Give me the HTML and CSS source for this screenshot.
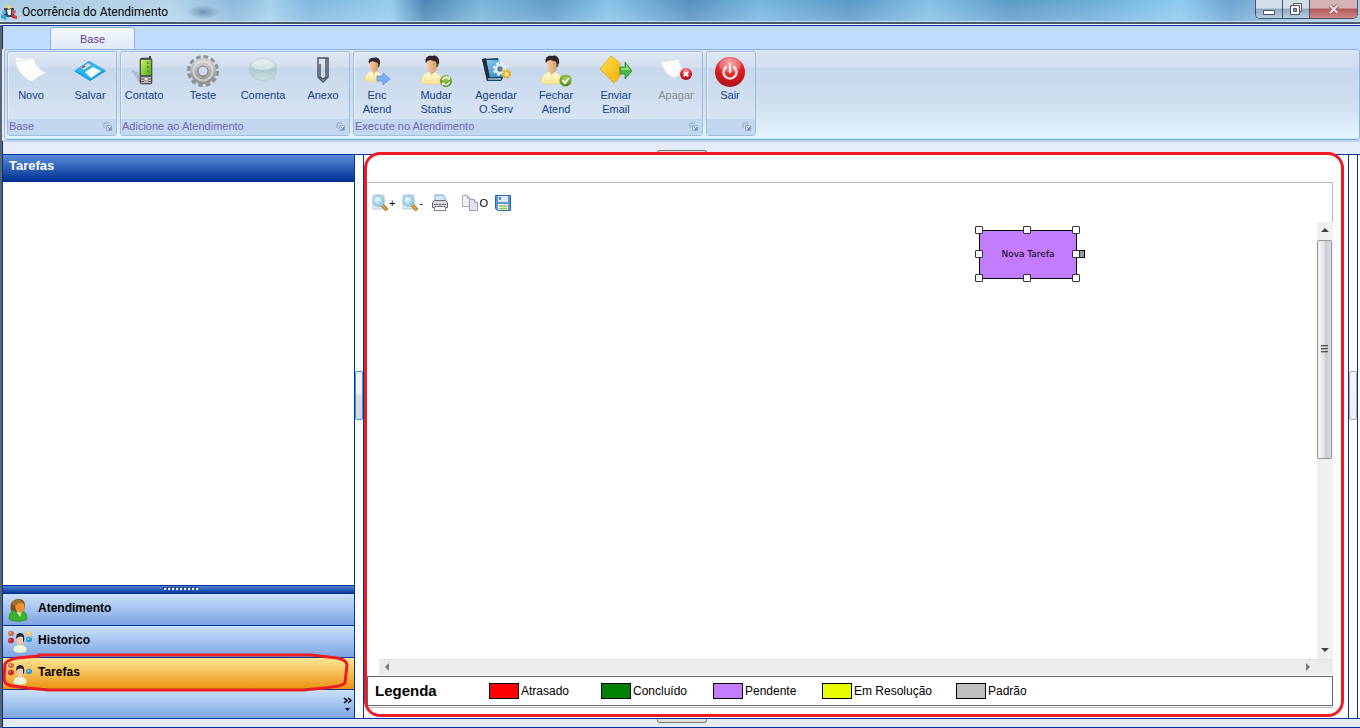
FILE: index.html
```html
<!DOCTYPE html>
<html lang="pt-BR">
  <head>
    <meta charset="utf-8">
    <title>Ocorrência do Atendimento</title>
    <link rel="stylesheet" href="styles.css">
  </head>
  <body>
    <!-- shared icons and gradients -->
    <svg class="defs" width="0" height="0">
      <defs>
        <linearGradient id="gPaper" x1="0" y1="0" x2="1" y2="1"><stop offset="0" stop-color="#fff"/><stop offset=".7" stop-color="#fbfbfb"/><stop offset="1" stop-color="#ddd"/></linearGradient>
        <linearGradient id="gGear" x1="0" y1="0" x2="0" y2="1"><stop offset="0" stop-color="#cfcfcf"/><stop offset="1" stop-color="#959595"/></linearGradient>
        <linearGradient id="gBubble" x1="0" y1="0" x2="0" y2="1"><stop offset="0" stop-color="#e3eded"/><stop offset=".5" stop-color="#aecbd1"/><stop offset="1" stop-color="#cbdfe3"/></linearGradient>
        <linearGradient id="gShirt" x1="0" y1="0" x2="0" y2="1"><stop offset="0" stop-color="#fffce0"/><stop offset="1" stop-color="#f8e38e"/></linearGradient>
        <linearGradient id="gFace" x1="0" y1="0" x2="1" y2="0"><stop offset="0" stop-color="#f7cfa5"/><stop offset="1" stop-color="#d69867"/></linearGradient>
        <linearGradient id="gMail" x1="0" y1="0" x2="1" y2="1"><stop offset="0" stop-color="#ffe44d"/><stop offset="1" stop-color="#f2ac05"/></linearGradient>
        <linearGradient id="gBook" x1="0" y1="0" x2="1" y2="1"><stop offset="0" stop-color="#8fd3f5"/><stop offset="1" stop-color="#2583c4"/></linearGradient>
        <linearGradient id="gLcd" x1="0" y1="0" x2="1" y2="1"><stop offset="0" stop-color="#c9f26b"/><stop offset="1" stop-color="#4dac0c"/></linearGradient>
        <radialGradient id="gRed" cx=".5" cy=".2" r=".9"><stop offset="0" stop-color="#f58d8d"/><stop offset=".5" stop-color="#dc1f25"/><stop offset="1" stop-color="#a00a10"/></radialGradient>
        <radialGradient id="gGreen" cx=".5" cy=".3" r=".7"><stop offset="0" stop-color="#a9d05a"/><stop offset="1" stop-color="#4c8a12"/></radialGradient>
        <radialGradient id="gLens" cx=".4" cy=".35" r=".7"><stop offset="0" stop-color="#e9fbff"/><stop offset="1" stop-color="#79bfe8"/></radialGradient>
      </defs>
      <symbol id="person" viewBox="0 0 32 32">
        <path d="M1 27c0-6 3-8 8-10h5c5 2 8 4 8 10-3 3-18 3-21 0z" fill="url(#gShirt)" stroke="#e0cf8a" stroke-width=".6"/>
        <path d="M8.500 15l3 5 5-5v-4h-8z" fill="#e0a877"/>
        <path d="M6.500 7c0-3 2-4 5-4s6 1 6 4c0 6-2 11-5.500 11S6.500 13 6.500 7z" fill="url(#gFace)"/>
        <path d="M6 8C4 3 8 0 12 1c4-2 8 2 7 7l-1.500 4h-1V7c-2-1-4-1-6-2-2 0-3.500 1-4.500 3z" fill="#33262f"/>
        <path d="M17.500 9v3" stroke="#3f8d35" stroke-width="1.500"/>
        <path d="M12 20v8M5 23v4M19 23v4" stroke="#ecd788" stroke-width=".8"/>
      </symbol>
      <symbol id="launcher" viewBox="0 0 9 9">
        <path d="M1 6V1h5" fill="none" stroke="#8fa9cb"/>
        <path d="M3.500 3.500h5v5h-5z" fill="#e9f1fb" stroke="#8fa9cb"/>
        <path d="M4.500 4.500l3 3M5 7.500h2.500V5" fill="none" stroke="#6f8bb2"/>
      </symbol>
      <symbol id="magnifier" viewBox="0 0 18 18">
        <path d="M2 1h11v14H2z" fill="#e6eef5" stroke="#b9c9d8"/>
        <path d="M10 10l6 6" stroke="#8a5a1c" stroke-width="3.600"/>
        <path d="M10 10l5.500 5.500" stroke="#f2a735" stroke-width="2.200"/>
        <circle cx="7.500" cy="7" r="5.500" fill="url(#gLens)" stroke="#9cc3da" stroke-width="1.300"/>
      </symbol>
      <symbol id="group" viewBox="0 0 26 24">
        <ellipse cx="4" cy="3.500" rx="3" ry="2.500" fill="#c56b45"/><circle cx="3" cy="3" r="1" fill="#e9b59d"/>
        <ellipse cx="4" cy="10.500" rx="3" ry="2.700" fill="#c9202c"/><circle cx="3" cy="10" r="1" fill="#ee8c92"/>
        <ellipse cx="22" cy="3.500" rx="3" ry="2.500" fill="#f7c467"/><circle cx="21.500" cy="3" r="1" fill="#fff1c8"/>
        <ellipse cx="22" cy="9.500" rx="3" ry="2.700" fill="#219bd0"/><circle cx="21.500" cy="9" r="1" fill="#a3e2fa"/>
        <path d="M6.500 20c0-4 3-5 6.500-5s6.500 1 6.500 5l-1.500 2c-3 1-7 1-10 0z" fill="#eaf4da" stroke="#c5dcae" stroke-width=".6"/>
        <path d="M9.500 7c1-2 6-2 7 0 0 5-1 9-3.500 9s-3.500-4-3.500-9z" fill="#f3cbac"/>
        <path d="M9.500 9c-1-4 1-6 4-6 3 0 4.500 3 3.500 8l-1 1V7c-2-1-5-1-6.500 2z" fill="#252430"/>
        <path d="M11 15.500l2 3 2.500-3-2.500 1z" fill="#fff"/>
      </symbol>
    </svg>

    <div class="window">
      <header class="titlebar">
        <svg class="app-icon" width="17" height="17" viewBox="0 0 17 17">
          <path d="M3 4h10v9H3z" fill="#3b4a59"/>
          <path d="M0 10l6 2-1 4-5-2z" fill="#3aa6cf"/>
          <circle cx="8" cy="3" r="2" fill="#f2d94a"/><path d="M6 6l4-1v6H7z" fill="#e7eef4"/>
          <path d="M11 10l5 2v3l-5-1z" fill="#d9323c"/><circle cx="13" cy="8" r="2" fill="#e05a60"/>
          <circle cx="3" cy="8" r="2" fill="#5cb9dc"/>
        </svg>
        <h1 class="title">Ocorrência do Atendimento</h1>
        <div class="window-buttons">
          <button class="win-btn" aria-label="Minimizar">
            <svg width="14" height="16" viewBox="0 0 14 16"><path d="M1.500 9.500h11v4h-11z" fill="#fff" stroke="#4c5666"/></svg>
          </button>
          <button class="win-btn" aria-label="Restaurar">
            <svg width="14" height="14" viewBox="0 0 14 14"><path d="M4.500 1.500h8v8h-8z" fill="#fff" stroke="#4c5666"/><path d="M1.500 3.500h9v9h-9z" fill="#fff" stroke="#4c5666"/><path d="M4.500 6.500h3v3h-3z" fill="#89a6c4" stroke="#4c5666"/></svg>
          </button>
          <button class="win-btn win-close" aria-label="Fechar">
            <svg width="14" height="14" viewBox="0 0 14 14"><path d="M3 3.500l7.500 7.500M10.500 3.500L3 11" stroke="#94626a" stroke-width="4"/><path d="M3 3.500l7.500 7.500M10.500 3.500L3 11" stroke="#e6d5d8" stroke-width="2.400"/></svg>
          </button>
        </div>
      </header>

      <div class="client">
        <nav class="tabs"><button class="tab">Base</button></nav>

        <div class="ribbon">
          <section class="ribbon-group">
            <div class="ribbon-buttons">
              <button class="tool">
                <svg viewBox="0 0 32 32"><path d="M0 6c6 1 12-2 19-3 1 7 6 12 13 15-6 2-10 5-15 9C8 23 2 15 0 6z" fill="url(#gPaper)" stroke="#d5d5d5" stroke-width=".6"/><path d="M1 6c0-4 2-5 4-3s8-1 14 0" fill="#fff" stroke="#ddd" stroke-width=".7"/></svg>
                <span>Novo</span>
              </button>
              <button class="tool">
                <svg viewBox="0 0 32 32"><path d="M0 16L15 6l17 10-16 10z" fill="#1798d8"/><path d="M1 15.500L15 6l16 9-15 9z" fill="#2bb4ed"/><path d="M11 17l8-5 8 4-10 7z" fill="#f4fafc"/><path d="M6 13l8-5 4 2-8 5z" fill="#d4dde2" stroke="#7795a6" stroke-width=".6"/><path d="M8 13l3-2" stroke="#41637a" stroke-width="1.500"/></svg>
                <span>Salvar</span>
              </button>
            </div>
            <footer class="group-label">Base <svg class="launcher"><use href="#launcher"/></svg></footer>
          </section>

          <section class="ribbon-group">
            <div class="ribbon-buttons">
              <button class="tool">
                <svg viewBox="0 0 32 32"><path d="M3 15l9 3v11z" fill="#98a4ae" opacity=".55"/><path d="M21 1h2v5h-2z" fill="#444"/><rect x="12" y="3" width="12" height="26" rx="2" fill="#575757" stroke="#3d3d3d" stroke-width=".6"/><path d="M13 5h10v15H13z" fill="url(#gLcd)"/><path d="M20 7v2M20 11v2M20 15v2" stroke="#4f9a26" stroke-width="2"/><path d="M13 22h10v6H13z" fill="#bdbdbd"/><path d="M13 24h3m4 0h3M13 26.500h3m4 0h3" stroke="#555"/><circle cx="18" cy="24" r="2" fill="#f4f4f4" stroke="#666" stroke-width=".7"/></svg>
                <span>Contato</span>
              </button>
              <button class="tool">
                <svg viewBox="0 0 32 32"><circle cx="16" cy="16" r="14" fill="none" stroke="#929292" stroke-width="4" stroke-dasharray="4.600 2.730"/><circle cx="16" cy="16" r="9" fill="none" stroke="url(#gGear)" stroke-width="8"/><circle cx="16" cy="16" r="9.500" fill="none" stroke="#e2e2e2" stroke-width="2" opacity=".7"/><circle cx="16" cy="16" r="5" fill="#cbdaec" stroke="#7c7c7c"/></svg>
                <span>Teste</span>
              </button>
              <button class="tool">
                <svg viewBox="0 0 32 32"><path d="M21 23c4 0 5 2 8 4-2-3-2-5-2-7z" fill="#b7cfd4"/><ellipse cx="16" cy="14.500" rx="14" ry="11" fill="url(#gBubble)" stroke="#b2c9cd" stroke-width=".7"/><ellipse cx="16" cy="9.500" rx="11" ry="5.500" fill="#eef4f4" opacity=".55"/></svg>
                <span>Comenta</span>
              </button>
              <button class="tool">
                <svg viewBox="0 0 32 32"><path d="M13 9v13l3 2 3-2V3h-8v19l5 5 5-5V3h-2" fill="none" stroke="#50545c" stroke-width="1.500"/></svg>
                <span>Anexo</span>
              </button>
            </div>
            <footer class="group-label">Adicione ao Atendimento <svg class="launcher"><use href="#launcher"/></svg></footer>
          </section>

          <section class="ribbon-group">
            <div class="ribbon-buttons">
              <button class="tool">
                <svg viewBox="0 0 32 32"><use href="#person" x="3" y="2" width="27" height="27"/><path d="M16 21h6v-3l7 6-7 6v-4h-6z" fill="#7eaef5" stroke="#5588d6" stroke-width=".7"/></svg>
                <span>Enc<br>Atend</span>
              </button>
              <button class="tool">
                <svg viewBox="0 0 32 32"><use href="#person" x="0" y="0" width="32" height="32"/><circle cx="26" cy="26" r="6" fill="url(#gGreen)"/><path d="M22.500 25a4 4 0 0 1 6-2M29.500 27a4 4 0 0 1-6 2" fill="none" stroke="#fff" stroke-width="1.500"/><path d="M27 24.500h3V21zM25 27.500h-3V31z" fill="#fff"/></svg>
                <span>Mudar<br>Status</span>
              </button>
              <button class="tool">
                <svg viewBox="0 0 32 32"><path d="M2 4l5 22h14l2-3L18 3z" fill="#174565"/><path d="M5 5h14l3 17H9z" fill="url(#gBook)"/><path d="M2 4l4-1 4 20-3 3z" fill="#20303c"/><path d="M8 24h13" stroke="#fff"/><circle cx="20" cy="14" r="5.500" fill="none" stroke="#eef2f4" stroke-width="3" stroke-dasharray="2.700 1.620"/><circle cx="20" cy="14" r="4" fill="#5d7f95" stroke="#dfe7ec" stroke-width="2.600"/><circle cx="26.500" cy="19" r="3.300" fill="none" stroke="#e0a012" stroke-width="2.400" stroke-dasharray="2 .960"/><circle cx="26.500" cy="19" r="2.500" fill="#fff4bb" stroke="#f0bb25" stroke-width="1.600"/></svg>
                <span>Agendar<br>O.Serv</span>
              </button>
              <button class="tool">
                <svg viewBox="0 0 32 32"><use href="#person" x="0" y="0" width="32" height="32"/><circle cx="25.500" cy="25.500" r="6" fill="url(#gGreen)"/><path d="M22.500 25l2.500 3 4-5" fill="none" stroke="#fff" stroke-width="2"/></svg>
                <span>Fechar<br>Atend</span>
              </button>
              <button class="tool">
                <svg viewBox="0 0 32 32"><path d="M0 14L11 1l9 7v13l-6 7z" fill="url(#gMail)" stroke="#d99a08" stroke-width=".7"/><path d="M1 14l10-4 8-2M11 10l3 17" fill="none" stroke="#f9cf38"/><path d="M20 12h5V7l7 9-7 8v-5h-5z" fill="#51b649" stroke="#2e8a31" stroke-width=".8"/><path d="M21 13h5V9.500l4 5.500h-9z" fill="#90d97e"/></svg>
                <span>Enviar<br>Email</span>
              </button>
              <button class="tool" disabled>
                <svg viewBox="0 0 32 32"><path d="M1 7l13-2 5-1c0 5 2 9 6 13l-10 6C7 21 3 14 1 7z" fill="url(#gPaper)" stroke="#ddd" stroke-width=".6"/><path d="M1 7c1-3 3-2 4-1l14-2" fill="none" stroke="#ddd"/><circle cx="26" cy="19" r="6" fill="url(#gRed)"/><path d="M23.700 16.700l4.600 4.600m0-4.600l-4.600 4.600" stroke="#fff" stroke-width="2"/></svg>
                <span>Apagar</span>
              </button>
            </div>
            <footer class="group-label">Execute no Atendimento <svg class="launcher"><use href="#launcher"/></svg></footer>
          </section>

          <section class="ribbon-group">
            <div class="ribbon-buttons">
              <button class="tool">
                <svg viewBox="0 0 32 32"><circle cx="16" cy="17" r="15" fill="url(#gRed)"/><ellipse cx="16" cy="10" rx="11" ry="7" fill="#fff" opacity=".22"/><path d="M12 12a6.500 6.500 0 1 0 8 0M16 9v8" fill="none" stroke="#fbe5e5" stroke-width="2.400" stroke-linecap="round"/></svg>
                <span>Sair</span>
              </button>
            </div>
            <footer class="group-label"><svg class="launcher"><use href="#launcher"/></svg></footer>
          </section>
        </div>

        <div class="strip strip-top"><i class="grip-h"></i></div>

        <div class="workspace">
          <aside class="sidebar">
            <h2 class="sidebar-title">Tarefas</h2>
            <div class="sidebar-body"></div>
            <div class="sidebar-splitter"><i></i><i></i><i></i><i></i><i></i><i></i><i></i><i></i><i></i></div>
            <button class="nav-item">
              <svg width="26" height="24" viewBox="0 0 26 24"><path d="M2 21c0-5 2-8 6-9h5c4 1 7 3 7 9-4 3-14 3-18 0z" fill="#3cb32b" stroke="#207d18" stroke-width=".7"/><path d="M9 13l4 6 2-6z" fill="#e8f8e4"/><path d="M4 13C2 5 6 1 12 1c6 0 7 6 5 11z" fill="#80521d"/><path d="M8 6c2-2 7-2 9 0 1 5-1 9-4 9s-5-4-5-9z" fill="#ee912c"/><path d="M5 5c3-5 10-4 12 1-4-2-7-1-9 3z" fill="#a4712e"/><path d="M6 8v4l4 2" fill="none" stroke="#555"/></svg>
              Atendimento
            </button>
            <button class="nav-item">
              <svg width="26" height="24"><use href="#group"/></svg>
              Historico
            </button>
            <button class="nav-item nav-active">
              <svg width="26" height="24"><use href="#group"/></svg>
              Tarefas
              <svg class="nav-mark" viewBox="0 0 346 40"><path d="M36 4L14 6Q4 8 2 12L1 26Q1 33 10 34L24 36 46 38H300L322 36Q340 34 342 31L344 13Q344 8 334 6L308 3H36z" fill="none" stroke="#ed1c24" stroke-width="3"/></svg>
            </button>
            <div class="nav-overflow">
              <button class="more" aria-label="Mais">
                <svg width="9" height="15" viewBox="0 0 9 15"><path d="M1 1l3 2.500L1 6M5 1l3 2.500L5 6" fill="none" stroke="#000" stroke-width="1.400"/><path d="M2 11h5l-2.500 3z"/></svg>
              </button>
            </div>
          </aside>

          <div class="splitter"><i class="grip-v grip-hot"></i></div>

          <main class="panel">
            <div class="toolbar">
              <button class="mini"><svg width="18" height="18"><use href="#magnifier"/></svg>+</button>
              <button class="mini"><svg width="18" height="18"><use href="#magnifier"/></svg>-</button>
              <button class="mini" aria-label="Imprimir">
                <svg width="18" height="18" viewBox="0 0 18 18"><path d="M4 8V1h8l2 2v5z" fill="#cfe8fc" stroke="#6fa2d4"/><path d="M1.500 8.500l2-2h11l2 2v5h-15z" fill="#d9d9dc" stroke="#686b74"/><path d="M3 10.500h12" stroke="#777"/><path d="M4 12.500h10l1 4H3z" fill="#f4f9fd" stroke="#7c8190"/></svg>
              </button>
              <button class="mini">
                <svg width="18" height="18" viewBox="0 0 18 18"><path d="M1.500 1.500h5l3 3v8h-8z" fill="#f0f0f8" stroke="#a9abc6"/><path d="M6.500 1.500v3h3" fill="none" stroke="#a9abc6"/><path d="M8.500 5.500h5l3 3v8h-8z" fill="#e3e4f2" stroke="#9a9cbc"/><path d="M13.500 5.500v3h3" fill="#fff" stroke="#9a9cbc"/></svg>O
              </button>
              <button class="mini" aria-label="Salvar">
                <svg width="18" height="18" viewBox="0 0 18 18"><path d="M1.500 1.500h15v15h-13l-2-2z" fill="#5c97dc" stroke="#2d65b0"/><path d="M4 2h10v6H4z" fill="#dceafa"/><path d="M6 3v3" stroke="#2d65b0" stroke-width="1.500"/><path d="M4 10h10v6H4z" fill="#f8fcf2"/><path d="M5 12h8M5 14.500h8" stroke="#84c44d" stroke-width="1.500"/></svg>
              </button>
            </div>

            <div class="canvas-row">
              <div class="canvas">
                <div class="node">Nova Tarefa
                  <i class="handle nw"></i><i class="handle n"></i><i class="handle ne"></i>
                  <i class="handle w"></i><i class="port"></i><i class="handle e"></i>
                  <i class="handle sw"></i><i class="handle s"></i><i class="handle se"></i>
                </div>
              </div>
              <div class="scroll-v">
                <svg width="15" height="17" viewBox="0 0 15 17"><path d="M4 10l4-4 4 4z" fill="#444"/></svg>
                <div class="thumb"><i></i><i></i><i></i></div>
                <svg class="arrow-end" width="15" height="17" viewBox="0 0 15 17"><path d="M4 6h8l-4 4z" fill="#444"/></svg>
              </div>
            </div>
            <div class="scroll-h">
              <svg width="17" height="16" viewBox="0 0 17 16"><path d="M10 3v8L6 7z" fill="#777"/></svg>
              <svg width="17" height="16" viewBox="0 0 17 16"><path d="M6 3v8l4-4z" fill="#777"/></svg>
            </div>

            <div class="legend">
              <h3 class="legend-title">Legenda</h3>
              <span class="legend-item"><i class="swatch late"></i>Atrasado</span>
              <span class="legend-item"><i class="swatch done"></i>Concluído</span>
              <span class="legend-item"><i class="swatch pending"></i>Pendente</span>
              <span class="legend-item"><i class="swatch solving"></i>Em Resolução</span>
              <span class="legend-item"><i class="swatch default"></i>Padrão</span>
            </div>
            <div class="panel-mark"></div>
          </main>

          <div class="splitter splitter-right"><i class="grip-v"></i></div>
        </div>

        <div class="strip strip-bottom"><i class="grip-h"></i></div>
      </div>
    </div>
  </body>
</html>
```
FILE: styles.css
```css
* {
  box-sizing: border-box;
}
body {
  margin: 0;
  font-family: "Liberation Sans", Arial, sans-serif;
  font-size: 11px;
  color: #000;
}
button {
  font: inherit;
  color: inherit;
  margin: 0;
  padding: 0;
  border: none;
  background: none;
}
h1, h2, h3 {
  margin: 0;
}
i {
  display: block;
}
.defs {
  position: absolute;
}
.window {
  display: flex;
  flex-direction: column;
  height: 100vh;
}

/* title bar */
.titlebar {
  display: flex;
  align-items: flex-start;
  height: 25px;
  flex-shrink: 0;
  padding: 0 2px 0 1px;
  border-bottom: 1px solid #fff;
  background:
    linear-gradient(transparent 21px, #c4dcec 21px, #c4dcec 22px, #4a5a6a 22px),
    radial-gradient(16px 7px at 203px 12px, rgba(70, 110, 145, 0.6), transparent),
    linear-gradient(rgba(255, 255, 255, 0), rgba(255, 255, 255, 0.2)),
    linear-gradient(90deg, #a9cbe4 0, #b4d3ea 170px, #8cb9dc 235px, #a3cfec 270px, #7fb6de 310px, #94cbee 390px, #4a86b4 425px, #78b4da 480px, #5f9cc8 550px, #84c2e8 610px, #5590c0 690px, #76b6e0 760px, #5a98c6 850px, #83c0e6 930px, #5c9ac6 1010px, #6cacd8 1090px, #8ccaf0 1180px, #6ba4d0 1230px, #9cc4e0 1300px, #a8c8de 100%);
}
.app-icon {
  margin-top: 4px;
}
.title {
  flex: 1;
  padding-left: 4px;
  font: 12px/24px Roboto, "Open Sans", sans-serif;
}
.window-buttons {
  display: flex;
  height: 19px;
  border: 1px solid #46566a;
  border-top: none;
  border-radius: 0 0 5px 5px;
  overflow: hidden;
}
.win-btn {
  display: flex;
  align-items: center;
  justify-content: center;
  width: 27px;
  border-right: 1px solid #46566a;
  background: linear-gradient(#d3e0ea 45%, #8faac2 50%, #b4cde0);
}
.win-close {
  width: 47px;
  border-right: none;
  background: linear-gradient(#d5b3b4 45%, #b5595a 50%, #cf8a86);
}

.client {
  flex: 1;
  min-height: 0;
  display: flex;
  flex-direction: column;
  border-left: 2px solid #5c646e;
  background: #e4ecfa;
}

/* ribbon */
.tabs {
  height: 24px;
  padding: 1px 0 0 47px;
  border-top: 1px solid #003399;
  border-left: 1px solid #003399;
  background: #bfdbff;
}
.tab {
  width: 85px;
  height: 23px;
  border: 1px solid #8db2e3;
  border-bottom: none;
  border-radius: 4px 4px 0 0;
  background: linear-gradient(#f4f8fe, #dfe9f6);
  color: #6a3fa0;
}
.ribbon {
  display: flex;
  align-items: flex-start;
  gap: 3px;
  height: 91px;
  padding: 1px 2px;
  margin-left: 2px;
  border: 1px solid #8db2e3;
  border-bottom-color: #8ca9cf;
  border-radius: 4px;
  box-shadow: inset 0 -1px #b8f0fc;
  background: linear-gradient(#dae5f3, #d0ddee 17px, #c7d7ed 18px, #cddcee 45px, #d8e7f5 70px, #e5f6ff);
}
.ribbon-group {
  display: flex;
  flex-direction: column;
  height: 85px;
  border: 1px solid #9ebfdb;
  border-radius: 3px;
  box-shadow: inset 1px 1px #e6eef8;
  background: linear-gradient(#dfe8f4, #d2dfef 15px, #c7d8ec 16px, #d7e4f3 68px);
}
.ribbon-buttons {
  flex: 1;
  display: flex;
  align-items: flex-start;
  gap: 12px;
  padding: 3px 2px 0 0;
}
.tool {
  display: flex;
  flex-direction: column;
  align-items: center;
  width: 48px;
  color: #15428b;
  line-height: 14px;
}
.tool:first-child {
  width: 46px;
}
.tool svg {
  width: 32px;
  height: 32px;
  margin-bottom: 1px;
}
.tool:disabled {
  color: #8d8d8d;
}
.group-label {
  display: flex;
  align-items: center;
  height: 16px;
  padding: 0 4px 2px 1px;
  background: #c2d8f0;
  color: #7664ba;
}
.launcher {
  width: 9px;
  height: 9px;
  margin-left: auto;
}

.strip {
  display: flex;
  justify-content: center;
  flex-shrink: 0;
  border-left: 1px solid #003399;
  background: #e4ecfa;
}
.strip-top {
  height: 14px;
  align-items: flex-end;
  border-top: 2px solid #bfd3ef;
}
.strip-bottom {
  height: 9px;
  align-items: flex-start;
  border-bottom: 1px solid #003399;
}
.grip-h {
  width: 50px;
  height: 4px;
  border: 1px solid #777;
  border-bottom: none;
  border-radius: 3px 3px 0 0;
  background: #e2e2e2;
}
.strip-bottom .grip-h {
  border: 1px solid #777;
  border-top: none;
  border-radius: 0 0 3px 3px;
}

/* workspace */
.workspace {
  flex: 1;
  min-height: 0;
  display: flex;
  border: 1px solid #003399;
  border-right: none;
  background: #fff;
}
.sidebar {
  width: 352px;
  flex-shrink: 0;
  display: flex;
  flex-direction: column;
  border-right: 1px solid #003399;
}
.sidebar-title {
  height: 27px;
  padding-left: 6px;
  border-bottom: 1px solid #002d96;
  background: linear-gradient(#5b8ddb, #003192);
  color: #fff;
  font-size: 13px;
  line-height: 22px;
}
.sidebar-body {
  flex: 1;
}
.sidebar-splitter {
  display: flex;
  justify-content: center;
  gap: 2px;
  height: 8px;
  padding-top: 2px;
  padding-left: 4px;
  border-top: 1px solid #002d96;
  background: linear-gradient(#4f83d3, #0a3a9c);
}
.sidebar-splitter i {
  width: 2px;
  height: 2px;
  background: #fff;
  box-shadow: -1px -1px #12306e;
}
.nav-item {
  position: relative;
  display: flex;
  align-items: center;
  gap: 5px;
  height: 32px;
  padding: 0 4px 3px;
  border-top: 1px solid #003399;
  background: linear-gradient(#cbe1fb, #7da5e2);
  font-size: 12px;
  font-weight: bold;
}
.nav-item > svg:first-child {
  flex-shrink: 0;
  margin-top: 4px;
}
.nav-active {
  background: linear-gradient(#fde794, #ee9311);
}
.nav-mark {
  position: absolute;
  left: 0;
  top: -6px;
  width: 346px;
  height: 40px;
  z-index: 1;
}
.nav-overflow {
  display: flex;
  justify-content: flex-end;
  height: 29px;
  padding-right: 2px;
  border-top: 1px solid #003399;
  background: linear-gradient(#cbe1fb, #7da5e2);
}
.more {
  display: flex;
  align-items: center;
}

.splitter {
  width: 9px;
  flex-shrink: 0;
  border-right: 1px solid #003399;
}
.splitter-right {
  width: 10px;
  margin-right: 2px;
  border-left: 1px solid #003399;
}
.grip-v {
  height: 49px;
  margin-top: 216px;
  border: 1px solid #a9a9a9;
  border-radius: 2px;
  background: linear-gradient(#f6f6f6, #f0f0f0);
}
.grip-hot {
  border-color: #3c9fd0;
  background: linear-gradient(#f0f2f4 45%, #d9dce0 50%, #d6d9df);
}

/* diagram panel */
.panel {
  position: relative;
  flex: 1;
  min-width: 0;
  display: flex;
  flex-direction: column;
  padding: 27px 15px 12px 3px;
}
.panel-mark {
  position: absolute;
  inset: -3px 4px 1px 0;
  border: 3px solid #ed1c24;
  border-radius: 16px;
  pointer-events: none;
}
.toolbar {
  display: flex;
  align-items: center;
  gap: 6px;
  height: 40px;
  padding-left: 4px;
  border-top: 1px solid #b8b8b8;
  border-right: 1px solid #b8b8b8;
}
.mini {
  display: flex;
  align-items: center;
  min-width: 24px;
}
.canvas-row {
  flex: 1;
  min-height: 0;
  display: flex;
}
.canvas {
  position: relative;
  flex: 1;
}
.node {
  position: absolute;
  left: 612px;
  top: 8px;
  width: 98px;
  height: 49px;
  border: 1px solid #000;
  background: #c47cff;
  font-family: "DejaVu Sans", sans-serif;
  font-size: 9px;
  line-height: 47px;
  text-align: center;
}
.handle {
  position: absolute;
  width: 8px;
  height: 8px;
  border: 1px solid #333;
  border-radius: 1px;
  background: #fff;
}
.nw, .n, .ne { top: -5px; }
.w, .e { top: 19px; }
.sw, .s, .se { bottom: -4px; }
.nw, .w, .sw { left: -5px; }
.n, .s { left: 43px; }
.ne, .e, .se { right: -4px; }
.port {
  position: absolute;
  top: 19px;
  right: -9px;
  width: 8px;
  height: 8px;
  border: 1px solid #000;
  background: #999;
}

.scroll-v {
  display: flex;
  flex-direction: column;
  width: 16px;
  padding-right: 1px;
  background: linear-gradient(90deg, #ededed, #f3f3f3);
}
.thumb {
  display: flex;
  flex-direction: column;
  align-items: center;
  justify-content: center;
  gap: 1px;
  height: 50%;
  margin-top: 1px;
  border: 1px solid #979797;
  border-radius: 2px;
  background: linear-gradient(90deg, #f5f5f5, #e4e4e6 45%, #c9cacf 60%, #dcdce0);
}
.thumb i {
  width: 7px;
  height: 2px;
  border-top: 1px solid #555;
  background: #aaa;
}
.arrow-end {
  margin-top: auto;
}
.scroll-h {
  display: flex;
  justify-content: space-between;
  height: 16px;
  margin: 0 0 1px 12px;
  padding-right: 16px;
  border-top: 1px solid #e0e0e0;
  background: #ececec;
}

.legend {
  display: grid;
  grid-template-columns: 114px 112px 112px 109px 134px auto;
  align-items: center;
  height: 30px;
  padding-left: 7px;
  border: 1px solid #666;
  box-shadow: 0 1px #fff, 0 2px #b8b8b8;
}
.legend-title {
  padding-bottom: 2px;
  font-size: 15px;
}
.legend-item {
  display: flex;
  align-items: center;
  gap: 2px;
  font-size: 12px;
}
.swatch {
  width: 30px;
  height: 16px;
  border: 1px solid #000;
}
.late { background: #f00; }
.done { background: #008000; }
.pending { background: #c47cff; }
.solving { background: #e8ff00; }
.default { background: #c0c0c0; }
```
